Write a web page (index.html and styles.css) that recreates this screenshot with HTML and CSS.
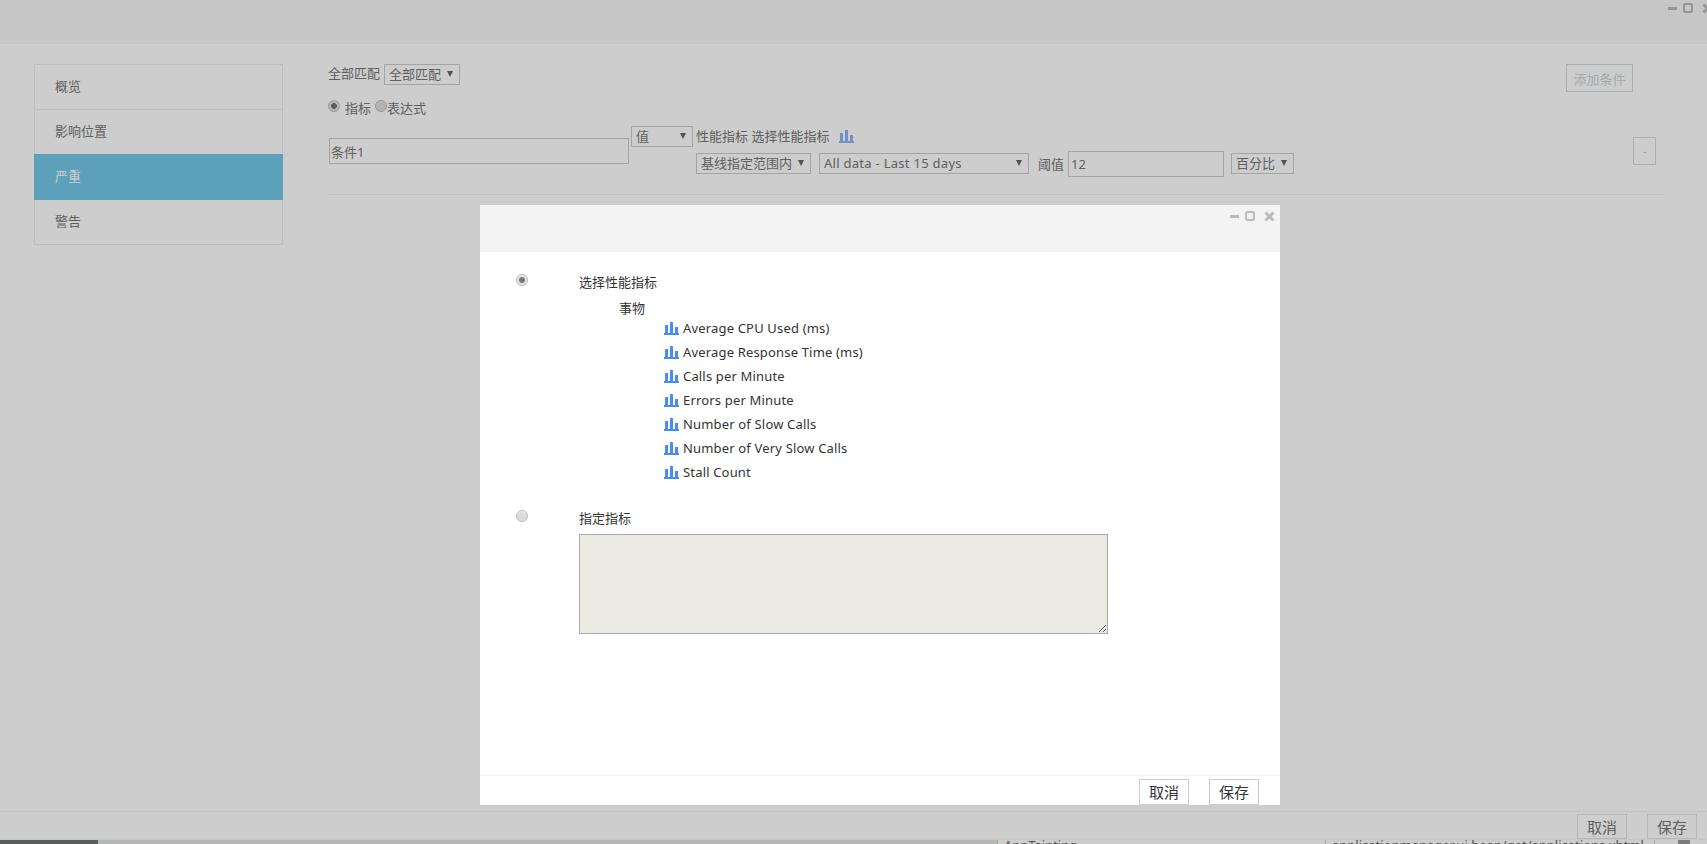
FILE: index.html
```html
<!DOCTYPE html>
<html lang="zh-CN">
<head>
    <meta charset="UTF-8">
    <meta name="viewport" content="width=device-width, initial-scale=1.0">
    <title>健康规则</title>
    <link rel="stylesheet" href="styles.css">
</head>
<body>
    <svg class="defs" width="0" height="0">
        <symbol id="bars" viewBox="0 0 15 13">
            <rect x="1" y="3" width="3" height="8"/>
            <rect x="6" y="0" width="3" height="11"/>
            <rect x="11" y="5" width="3" height="6"/>
            <rect x="0" y="11" width="15" height="2"/>
        </symbol>
    </svg>

    <div class="win-head">
        <div class="win-btns page-btns">
            <span class="win-min"></span>
            <span class="win-max"></span>
            <svg class="win-close" viewBox="0 0 11 11"><path d="M1.5 1.5l8 8M9.5 1.5l-8 8"/></svg>
        </div>
    </div>

    <div class="main">
        <ul class="side-nav">
            <li>概览</li>
            <li>影响位置</li>
            <li class="active">严重</li>
            <li>警告</li>
        </ul>

        <div class="content">
            <div class="top-row">
                <div>
                    <div class="match-row">
                        <span>全部匹配</span>
                        <div class="sel sel-match"><select><option>全部匹配</option></select></div>
                    </div>
                    <div class="radio-row">
                        <input type="radio" name="kind" checked>
                        <label class="first-label">指标</label>
                        <input type="radio" name="kind" class="second-radio">
                        <label>表达式</label>
                    </div>
                </div>
                <button class="btn-add">添加条件</button>
            </div>

            <div class="cond">
                <input class="cond-name" type="text" value="条件1">
                <div class="sel sel-value"><select><option>值</option></select></div>
                <div class="cond-detail">
                    <div class="metric-line">
                        <span>性能指标 选择性能指标</span>
                        <svg class="bar-icon dim-icon"><use href="#bars"/></svg>
                    </div>
                    <div class="limit-line">
                        <div class="sel sel-base"><select><option>基线指定范围内</option></select></div>
                        <div class="sel sel-data"><select><option>All data - Last 15 days</option></select></div>
                        <span class="limit-label">阈值</span>
                        <input class="limit-input" type="text" value="12">
                        <div class="sel sel-unit"><select><option>百分比</option></select></div>
                    </div>
                </div>
                <button class="btn-del">-</button>
            </div>
            <div class="divider"></div>
        </div>
    </div>

    <div class="page-foot">
        <button class="btn-foot">取消</button>
        <button class="btn-foot">保存</button>
    </div>

    <div class="strip">
        <div class="progress"><div class="progress-done"></div></div>
        <div class="strip-cell cell-name">AppTainting</div>
        <div class="strip-cell cell-url">applicationmanager.ui.bean/get/applications.xhtml...</div>
        <div class="strip-cell cell-tool"><span class="tool-mark"></span></div>
    </div>

    <div class="overlay"></div>

    <div class="modal">
        <div class="modal-head">
            <div class="win-btns">
                <span class="win-min"></span>
                <span class="win-max"></span>
                <svg class="win-close" viewBox="0 0 11 11"><path d="M1.5 1.5l8 8M9.5 1.5l-8 8"/></svg>
            </div>
        </div>

        <div class="modal-body">
            <div class="pick">
                <input type="radio" name="pick" checked>
                <div class="pick-main">
                    <div class="pick-title">选择性能指标</div>
                    <div class="tree-group">事物</div>
                    <ul class="metric-list">
                        <li><svg class="bar-icon"><use href="#bars"/></svg>Average CPU Used (ms)</li>
                        <li><svg class="bar-icon"><use href="#bars"/></svg>Average Response Time (ms)</li>
                        <li><svg class="bar-icon"><use href="#bars"/></svg>Calls per Minute</li>
                        <li><svg class="bar-icon"><use href="#bars"/></svg>Errors per Minute</li>
                        <li><svg class="bar-icon"><use href="#bars"/></svg>Number of Slow Calls</li>
                        <li><svg class="bar-icon"><use href="#bars"/></svg>Number of Very Slow Calls</li>
                        <li><svg class="bar-icon"><use href="#bars"/></svg>Stall Count</li>
                    </ul>
                </div>
            </div>
            <div class="pick pick-custom">
                <input type="radio" name="pick">
                <div class="pick-main">
                    <div class="pick-title">指定指标</div>
                    <textarea class="custom-metric"></textarea>
                </div>
            </div>
        </div>

        <div class="modal-foot">
            <button class="btn-modal">取消</button>
            <button class="btn-modal">保存</button>
        </div>
    </div>
</body>
</html>
```

FILE: styles.css
```css
html, body {
    height: 100%;
}
body {
    margin: 0;
    display: flex;
    flex-direction: column;
    overflow: hidden;
    background: #fff;
    color: #777;
    font-family: "Noto Sans", "Noto Sans CJK SC", sans-serif;
    font-size: 13px;
}
ul {
    list-style: none;
    margin: 0;
    padding: 0;
}
button, input, select, textarea {
    font-family: inherit;
    font-size: 13px;
    color: inherit;
    box-sizing: border-box;
}
.defs {
    position: absolute;
}

/* window bars */
.win-head {
    flex: none;
    height: 44px;
    background: #f7f7f7;
    display: flex;
    justify-content: flex-end;
}
.win-btns {
    display: flex;
    align-items: flex-start;
    padding: 6px 5px 0 0;
}
.page-btns {
    padding: 3px 0 0 0;
    margin-right: -6px;
}
.win-min {
    width: 9px;
    height: 3px;
    margin: 4px 6px 0 0;
    background: #bbb;
}
.win-max {
    width: 10px;
    height: 10px;
    box-sizing: border-box;
    border: 2px solid #bbb;
    border-radius: 2px;
    margin-right: 9px;
}
.win-close {
    width: 11px;
    height: 11px;
}
.win-close path {
    stroke: #bbb;
    stroke-width: 3;
    fill: none;
}

/* page */
.main {
    flex: 1;
    display: flex;
    gap: 45px;
    padding: 20px 44px 0 34px;
    background: #fff;
}
.side-nav {
    flex: none;
    width: 249px;
    height: 181px;
    box-sizing: border-box;
    border: 1px solid #eee;
    border-bottom: none;
}
.side-nav li {
    height: 45px;
    box-sizing: border-box;
    padding-left: 20px;
    line-height: 42px;
    border-bottom: 1px solid #eee;
}
.side-nav li.active {
    height: 46px;
    margin: -1px -1px 0;
    padding-left: 21px;
    border-bottom: none;
    line-height: 44px;
    background: #74c7e6;
    color: #fff;
}
.content {
    flex: 1;
}
.top-row {
    display: flex;
    justify-content: space-between;
    align-items: flex-start;
}
.match-row {
    display: flex;
    gap: 4px;
    line-height: 19px;
}
.radio-row {
    display: flex;
    margin-top: 15px;
    line-height: 16px;
}
input[type="radio"] {
    appearance: none;
    flex: none;
    width: 12px;
    height: 12px;
    margin: 0;
    border: 1px solid #bbb;
    border-radius: 50%;
    background: #dcdcdc;
    box-shadow: inset 0 1px 1px #efefef;
}
input[type="radio"]:checked {
    background: radial-gradient(circle, #777 0 2.5px, #e2e2e2 3.5px);
}
.first-label {
    margin-left: 5px;
}
.second-radio {
    margin-left: 4px !important;
}
.sel {
    position: relative;
    height: 21px;
    flex: none;
}
.sel::after {
    content: "";
    position: absolute;
    top: 7px;
    right: 7px;
    border-top: 6px solid #666;
    border-left: 3px solid transparent;
    border-right: 3px solid transparent;
    pointer-events: none;
}
.sel select {
    appearance: none;
    display: block;
    width: 100%;
    height: 100%;
    padding: 0 0 2px 4px;
    border: 1px solid #ccc;
    border-radius: 0;
    background: transparent;
}
.sel-match { width: 76px; }
.sel-value { width: 62px; margin-left: 2px; }
.sel-base { width: 115px; margin-top: 2px; }
.sel-data { width: 210px; margin-top: 2px; }
.sel-data select { letter-spacing: 0.28px; }
.sel-unit { width: 63px; margin-top: 2px; }

.btn-add {
    width: 67px;
    height: 28px;
    margin-right: 30px;
    padding: 0;
    border: 1px solid #d1dbe0;
    background: transparent;
    color: #ccd4d8;
}
.cond {
    display: flex;
    align-items: flex-start;
    margin-top: 10px;
}
.cond-name {
    flex: none;
    width: 300px;
    height: 26px;
    margin: 12px 0 0 1px;
    padding: 0 1px;
    border: 1px solid #ccc;
    background: transparent;
}
.cond-detail {
    margin-left: 3px;
}
.metric-line {
    display: flex;
    align-items: flex-start;
    height: 25px;
    line-height: 21px;
}
.bar-icon {
    width: 15px;
    height: 13px;
    flex: none;
    fill: #4a8af4;
}
.dim-icon {
    margin: 4px 0 0 10px;
    fill: #8fb5f8;
}
.limit-line {
    display: flex;
    align-items: flex-start;
}
.sel-data {
    margin-left: 8px;
}
.limit-label {
    margin-left: 9px;
    line-height: 26px;
}
.limit-input {
    flex: none;
    width: 156px;
    height: 26px;
    margin-left: 4px;
    padding: 0 2px;
    border: 1px solid #ccc;
    background: transparent;
}
.sel-unit {
    margin-left: 7px;
}
.btn-del {
    flex: none;
    width: 23px;
    height: 28px;
    margin: 11px 7px 0 auto;
    padding: 0;
    border: 1px solid #d1dbe0;
    background: transparent;
    color: #ccd4d8;
}
.divider {
    height: 1px;
    margin-top: 17px;
    background: #f1f1f1;
}
.page-foot {
    flex: none;
    height: 28px;
    box-sizing: border-box;
    display: flex;
    justify-content: flex-end;
    gap: 20px;
    padding: 2px 10px 0 0;
    border-top: 1px solid #f4f4f4;
}
.btn-foot {
    width: 50px;
    height: 25px;
    padding: 0;
    border: 1px solid #e4e4e4;
    background: #fff;
    font-size: 15px;
}

/* cut off by the window edge */
.strip {
    flex: none;
    height: 5px;
    display: flex;
    overflow: hidden;
    border-top: 1px solid #f8f8f8;
    box-sizing: border-box;
    color: #666;
}
.progress {
    width: 997px;
    flex: none;
    background: #e1e4e1;
}
.progress-done {
    width: 98px;
    height: 100%;
    background: #707677;
}
.strip-cell {
    flex: none;
    box-sizing: border-box;
    padding-left: 6px;
    border-left: 1px solid #ccc;
    line-height: 10px;
    white-space: nowrap;
}
.cell-name { width: 328px; }
.cell-url { width: 329px; }
.cell-tool { flex: 1; padding-left: 23px; }
.tool-mark {
    display: block;
    width: 12px;
    height: 8px;
    background: #999;
}

/* dialog */
.overlay {
    position: fixed;
    inset: 0;
    background: rgba(0, 0, 0, 0.196);
}
.modal {
    position: fixed;
    left: 480px;
    top: 205px;
    width: 800px;
    height: 600px;
    display: flex;
    flex-direction: column;
    background: #fff;
    color: #333;
}
.modal-head {
    flex: none;
    height: 47px;
    display: flex;
    justify-content: flex-end;
    background: #f3f3f3;
}
.modal-body {
    flex: 1;
    padding: 20px 0 0 36px;
}
.pick {
    display: flex;
    align-items: flex-start;
}
.pick input[type="radio"] {
    margin-top: 2px;
}
.pick-main {
    margin-left: 51px;
}
.pick-title {
    line-height: 20px;
}
.tree-group {
    margin: 6px 0 0 40px;
    line-height: 20px;
}
.metric-list {
    margin: -2px 0 0 85px;
}
.metric-list li {
    display: flex;
    align-items: center;
    gap: 4px;
    height: 24px;
    letter-spacing: 0.17px;
}
.pick-custom {
    margin-top: 24px;
}
.custom-metric {
    display: block;
    width: 529px;
    height: 100px;
    margin-top: 6px;
    border: 1px solid #a9a9a9;
    background: #eaeae2;
}
.modal-foot {
    flex: none;
    height: 30px;
    box-sizing: border-box;
    display: flex;
    justify-content: flex-end;
    gap: 20px;
    padding: 3px 21px 0 0;
    border-top: 1px solid #f3f3f3;
}
.btn-modal {
    width: 50px;
    height: 26px;
    padding: 0 0 2px;
    border: 1px solid #ccc;
    background: #fff;
    font-size: 15px;
    color: #333;
}
```
